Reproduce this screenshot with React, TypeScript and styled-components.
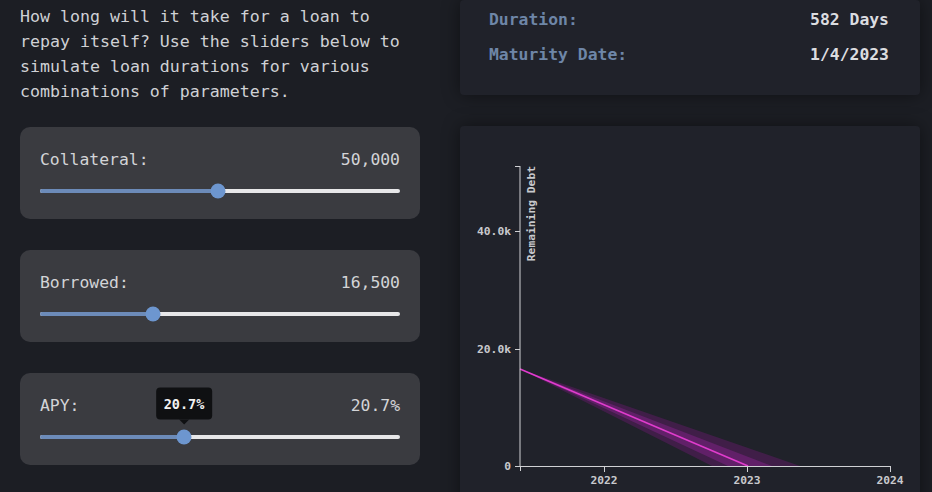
import React from "react";
import styled, { createGlobalStyle } from "styled-components";

const Global = createGlobalStyle`
  html, body { margin: 0; padding: 0; background: #1c1e24; overflow: hidden; }
  body { font-family: "DejaVu Sans Mono", "Liberation Mono", monospace; }
`;

const Page = styled.div`
  display: grid;
  grid-template-columns: 400px 460px;
  column-gap: 40px;
  padding: 0 12px 0 20px;
  height: 492px;
  overflow: hidden;
`;

const LeftCol = styled.div`
  display: flex;
  flex-direction: column;
  gap: 31px;
`;

const Intro = styled.p`
  margin: 0 0 -8px 0;
  padding-top: 4px;
  font-size: 16.6px;
  line-height: 25px;
  color: #cfd1d5;
`;

const Card = styled.div`
  background: #3a3b40;
  border-radius: 10px;
  padding: 22px 20px 26px 20px;
  display: flex;
  flex-direction: column;
  gap: 18px;
`;

const LabelRow = styled.div`
  display: flex;
  justify-content: space-between;
  font-size: 16.4px;
  line-height: 22px;
  color: #d3d4d7;
`;

const Track = styled.div`
  position: relative;
  height: 4px;
  border-radius: 2px;
  background: #e7e7e9;
`;

const Fill = styled.div`
  height: 100%;
  border-radius: 2px;
  background: #6c8bb9;
`;

const Thumb = styled.div`
  position: absolute;
  top: 50%;
  width: 15px;
  height: 15px;
  border-radius: 50%;
  background: #6d96cf;
  transform: translate(-50%, -50%);
`;

const Tip = styled.div`
  position: absolute;
  bottom: 25px;
  left: 50%;
  transform: translateX(-50%);
  background: #0f1012;
  color: #f2f2f2;
  font-weight: bold;
  font-size: 13.5px;
  line-height: 32px;
  padding: 0 8px;
  border-radius: 4px;
  white-space: nowrap;
  &::after {
    content: "";
    position: absolute;
    left: 50%;
    bottom: -5px;
    margin-left: -5px;
    border-left: 5px solid transparent;
    border-right: 5px solid transparent;
    border-top: 5px solid #0f1012;
  }
`;

const RightCol = styled.div`
  display: flex;
  flex-direction: column;
  gap: 31px;
`;

const Panel = styled.div`
  background: #20222a;
  border-radius: 4px;
  box-shadow: 0 0 18px rgba(0, 0, 0, 0.45);
`;

const StatsPanel = styled(Panel)`
  padding: 2px 31px 23px 29px;
`;

const StatRow = styled.div`
  display: flex;
  justify-content: space-between;
  font-weight: bold;
  font-size: 16.4px;
  line-height: 35px;
`;

const StatLabel = styled.span`
  color: #6e86a7;
`;

const StatValue = styled.span`
  color: #dcdde0;
`;

const ChartPanel = styled(Panel)`
  height: 400px;
`;

const Chart = styled.svg`
  display: block;
  font-family: "DejaVu Sans Mono", "Liberation Mono", monospace;
  font-weight: bold;
  font-size: 11.3px;
`;

type SliderProps = { label: string; value: string; pct: number; tip?: string };

function Slider({ label, value, pct, tip }: SliderProps) {
  return (
    <Card>
      <LabelRow>
        <span>{label}</span>
        <span>{value}</span>
      </LabelRow>
      <Track>
        <Fill style={{ width: `${pct}%` }} />
        <Thumb style={{ left: `${pct}%` }}>{tip && <Tip>{tip}</Tip>}</Thumb>
      </Track>
    </Card>
  );
}

const axis = "#d0d1d4";

function DebtChart() {
  const yTicks = [
    { y: 105, label: "40.0k" },
    { y: 223, label: "20.0k" },
    { y: 340, label: "0" },
  ];
  const xTicks = [
    { x: 144, label: "2022" },
    { x: 287, label: "2023" },
    { x: 430, label: "2024" },
  ];
  return (
    <Chart width={460} height={400} viewBox="0 0 460 400">
      <polygon points="60,243 340,340 252,340" fill="#5b1b60" opacity={0.55} />
      <polygon points="60,243 312,340 268,340" fill="#7c2384" opacity={0.55} />
      <line x1={60} y1={243} x2={288} y2={340} stroke="#e03ccd" strokeWidth={1.6} />
      <line x1={60} y1={40} x2={60} y2={340} stroke={axis} strokeWidth={1} />
      <line x1={55} y1={40.5} x2={60} y2={40.5} stroke={axis} strokeWidth={1} />
      {yTicks.map((t) => (
        <g key={t.label}>
          <line x1={55} y1={t.y + 0.5} x2={60} y2={t.y + 0.5} stroke={axis} strokeWidth={1} />
          <text x={51} y={t.y + 4} textAnchor="end" fill="#c8c9cd">
            {t.label}
          </text>
        </g>
      ))}
      <line x1={60} y1={340.5} x2={430} y2={340.5} stroke={axis} strokeWidth={1} />
      <line x1={60.5} y1={340} x2={60.5} y2={345} stroke={axis} strokeWidth={1} />
      {xTicks.map((t) => (
        <g key={t.label}>
          <line x1={t.x + 0.5} y1={340} x2={t.x + 0.5} y2={346} stroke={axis} strokeWidth={1} />
          <text x={t.x} y={358} textAnchor="middle" fill="#c8c9cd">
            {t.label}
          </text>
        </g>
      ))}
      <text transform="rotate(-90)" x={-40} y={75} textAnchor="end" fill="#c8c9cd">
        Remaining Debt
      </text>
    </Chart>
  );
}

export default function App() {
  return (
    <>
      <Global />
      <Page>
        <LeftCol>
          <Intro>
            How long will it take for a loan to repay itself? Use the sliders below to simulate loan
            durations for various combinations of parameters.
          </Intro>
          <Slider label="Collateral:" value="50,000" pct={49.5} />
          <Slider label="Borrowed:" value="16,500" pct={31.5} />
          <Slider label="APY:" value="20.7%" pct={40} tip="20.7%" />
        </LeftCol>
        <RightCol>
          <StatsPanel>
            <StatRow>
              <StatLabel>Duration:</StatLabel>
              <StatValue>582 Days</StatValue>
            </StatRow>
            <StatRow>
              <StatLabel>Maturity Date:</StatLabel>
              <StatValue>1/4/2023</StatValue>
            </StatRow>
          </StatsPanel>
          <ChartPanel>
            <DebtChart />
          </ChartPanel>
        </RightCol>
      </Page>
    </>
  );
}
